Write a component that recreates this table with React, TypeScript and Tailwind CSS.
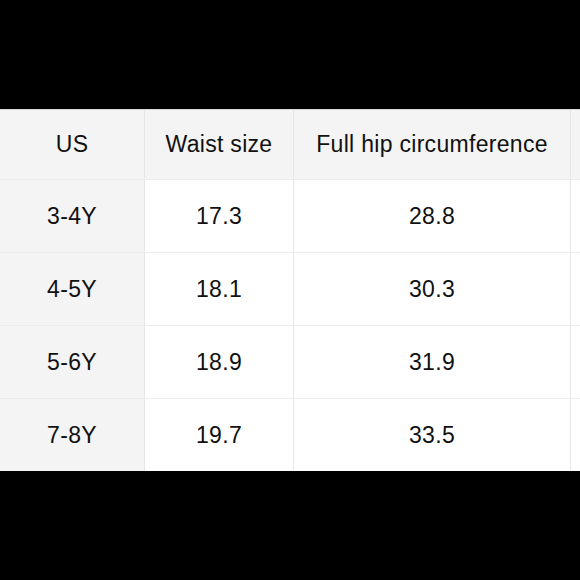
import React from "react";

const rows = [
  ["3-4Y", "17.3", "28.8"],
  ["4-5Y", "18.1", "30.3"],
  ["5-6Y", "18.9", "31.9"],
  ["7-8Y", "19.7", "33.5"],
];

export default function App() {
  return (
    <div
      className="w-[580px] h-[580px] bg-black overflow-hidden flex flex-col"
      style={{ fontFamily: '"Liberation Sans", Arial, sans-serif' }}
    >
      <div className="h-[109px] shrink-0" />
      <div className="border-t border-[#d8d8d8] bg-white text-[23px] tracking-[0.3px] text-[#111]">
        <div className="grid grid-cols-[144px_149px_277px_200px] h-[69px] bg-[#f4f4f4]">
          <div className="flex items-center justify-center">US</div>
          <div className="flex items-center justify-center border-l border-[#e6e6e6]">Waist size</div>
          <div className="flex items-center justify-center border-l border-[#e6e6e6]">Full hip circumference</div>
          <div className="border-l border-[#e6e6e6]" />
        </div>
        {rows.map((r) => (
          <div key={r[0]} className="grid grid-cols-[144px_149px_277px_200px] h-[73px] border-t border-[#ececec]">
            <div className="flex items-center justify-center bg-[#f4f4f4]">{r[0]}</div>
            <div className="flex items-center justify-center border-l border-[#e6e6e6]">{r[1]}</div>
            <div className="flex items-center justify-center border-l border-[#e6e6e6]">{r[2]}</div>
            <div className="border-l border-[#e6e6e6]" />
          </div>
        ))}
      </div>
    </div>
  );
}
